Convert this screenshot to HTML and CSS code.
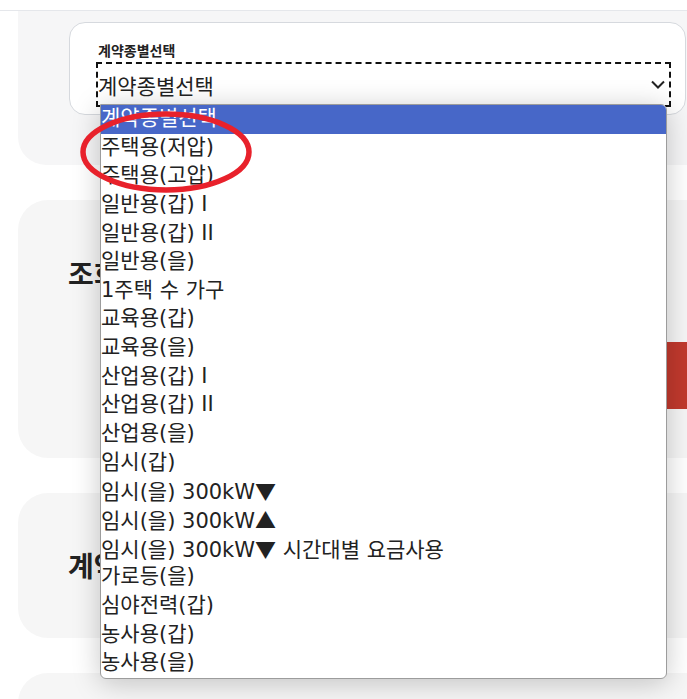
FILE: index.html
```html
<!DOCTYPE html>
<html lang="ko">
<head>
    <meta charset="UTF-8">
    <meta name="viewport" content="width=device-width, initial-scale=1.0">
    <title>전기요금 계산</title>
    <link rel="stylesheet" href="styles.css">
</head>
<body>

<div class="topbar"></div>

<div class="main">
    <div class="section-top">
        <div class="select-card">
            <div class="select-label">계약종별선택</div>
            <div class="select-box">
                <span>계약종별선택</span>
                <svg class="chevron" width="14" height="9" viewBox="0 0 14 9">
                    <polyline points="1,1.5 7,7.5 13,1.5" fill="none" stroke="#222" stroke-width="2"/>
                </svg>
            </div>
        </div>
    </div>

    <div class="panel panel-search">
        <h2>조회조건</h2>
        <div class="panel-row">
            <div class="field"></div>
            <button class="btn-red">조회</button>
        </div>
    </div>

    <div class="panel panel-contract">
        <h2>계약정보</h2>
    </div>

    <div class="panel panel-last"></div>
</div>

<!-- 열린 드롭다운 목록 -->
<div class="dropdown">
    <div class="option selected">계약종별선택</div>
    <div class="option">주택용(저압)</div>
    <div class="option">주택용(고압)</div>
    <div class="option">일반용(갑) I</div>
    <div class="option">일반용(갑) II</div>
    <div class="option">일반용(을)</div>
    <div class="option">1주택 수 가구</div>
    <div class="option">교육용(갑)</div>
    <div class="option">교육용(을)</div>
    <div class="option">산업용(갑) I</div>
    <div class="option">산업용(갑) II</div>
    <div class="option">산업용(을)</div>
    <div class="option">임시(갑)</div>
    <div class="option">임시(을) 300kW<span class="tri">▼</span></div>
    <div class="option">임시(을) 300kW<span class="tri">▲</span></div>
    <div class="option">임시(을) 300kW<span class="tri">▼</span> 시간대별 요금사용</div>
    <div class="option">가로등(을)</div>
    <div class="option">심야전력(갑)</div>
    <div class="option">농사용(갑)</div>
    <div class="option">농사용(을)</div>
</div>

<svg class="mark" width="176" height="84" viewBox="0 0 176 84">
    <ellipse cx="88" cy="42" rx="83" ry="38" fill="none" stroke="#e8212b" stroke-width="5.5"/>
</svg>

</body>
</html>
```

FILE: styles.css
```css
body {
    margin: 0;
    font-family: "Noto Sans", "Noto Sans CJK KR", sans-serif;
    color: #222;
    background: #fff;
    overflow: hidden;
}
.topbar {
    height: 10px;
    border-bottom: 1px solid #e5e7eb;
}
.main {
    padding-left: 18px;
    overflow: hidden;
}
.section-top {
    background: #f6f6f7;
    padding: 11px 0 50px 51px;
    border-bottom-left-radius: 28px;
}
.select-card {
    box-sizing: border-box;
    width: 617px;
    height: 93px;
    padding: 18px 0 0 26px;
    background: #fff;
    border: 1px solid #d6d9de;
    border-radius: 16px;
}
.select-label {
    font-size: 14px;
    font-weight: bold;
    line-height: 20px;
    padding-left: 2px;
    margin-bottom: 1px;
}
.select-box {
    box-sizing: border-box;
    width: 575px;
    height: 45px;
    border: 2px dashed #111;
    display: flex;
    align-items: center;
    justify-content: space-between;
    font-size: 21px;
    padding: 0 4px 0 0;
}
.panel {
    background: #f6f6f6;
    border-radius: 30px;
    margin-top: 35px;
    width: 720px;
    box-sizing: border-box;
    padding-left: 50px;
}
.panel h2 {
    margin: 0;
    font-size: 28px;
    font-weight: bold;
    line-height: 40px;
}
.panel-search {
    height: 258px;
    padding-top: 54px;
}
.panel-row {
    display: flex;
    margin-top: 48px;
}
.field {
    flex: 1;
}
.btn-red {
    width: 200px;
    height: 67px;
    background: #c1392d;
    border: none;
    color: #fff;
    font-size: 18px;
}
.panel-contract {
    height: 145px;
    display: flex;
    align-items: center;
}
.panel-last {
    height: 120px;
}
.dropdown {
    position: absolute;
    left: 100px;
    top: 104px;
    width: 567px;
    box-sizing: border-box;
    background: #fff;
    border: 1px solid #9c9c9c;
    border-radius: 0 6px 6px 6px;
    box-shadow: 0 4px 28px rgba(0, 0, 0, 0.22);
    overflow: hidden;
}
.option {
    font-family: "DejaVu Sans", "Noto Sans CJK KR", sans-serif;
    font-size: 21px;
    line-height: 26px;
    height: 28.65px;
    color: #222;
    white-space: nowrap;
}
.option .tri {
    font-family: "Noto Sans CJK KR", sans-serif;
}
.option.selected {
    background: #4767c8;
    color: #fff;
}
.mark {
    position: absolute;
    left: 78px;
    top: 110px;
}
```
